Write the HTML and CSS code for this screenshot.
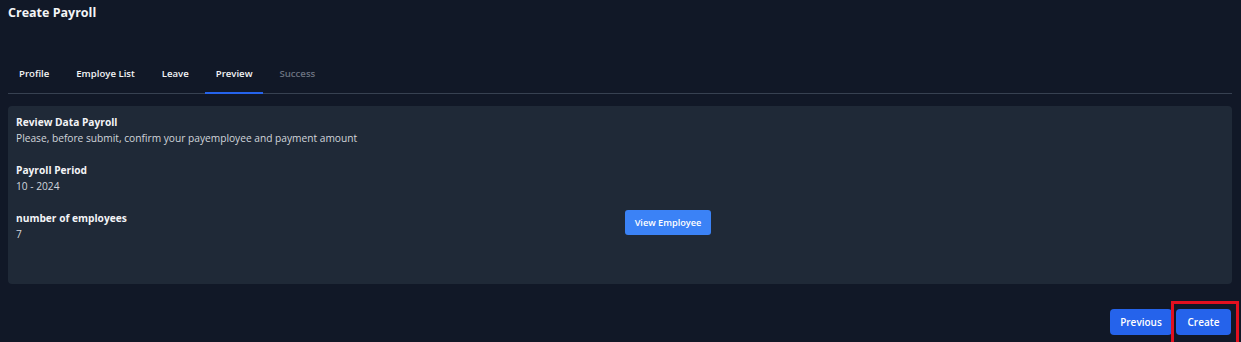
FILE: index.html
```html
<!DOCTYPE html>
<html>
<head>
<meta charset="utf-8">
<link rel="stylesheet" href="styles.css">
</head>
<body>
<div class="page">
  <h1 class="title">Create Payroll</h1>
  <nav class="tabs">
    <span class="tab">Profile</span>
    <span class="tab">Employe List</span>
    <span class="tab">Leave</span>
    <span class="tab active">Preview</span>
    <span class="tab disabled">Success</span>
  </nav>
  <section class="card">
    <div class="full">
      <div class="label">Review Data Payroll</div>
      <div class="value">Please, before submit, confirm your payemployee and payment amount</div>
    </div>
    <div class="full">
      <div class="label">Payroll Period</div>
      <div class="value">10 - 2024</div>
    </div>
    <div>
      <div class="label">number of employees</div>
      <div class="value">7</div>
    </div>
    <div class="right">
      <button class="btn btn-light">View Employee</button>
    </div>
  </section>
  <div class="actions">
    <button class="btn btn-primary prev">Previous</button>
    <span class="highlight"><button class="btn btn-primary create">Create</button></span>
  </div>
</div>
</body>
</html>
```
FILE: styles.css
```css
html, body {
  margin: 0;
  padding: 0;
  background: #111827;
}
body {
  font-family: "Open Sans", "Segoe UI", sans-serif;
  color: #e5e7eb;
  font-size: 10.2px;
}
.page {
  padding: 0 9px 0 8px;
  height: 342px;
  overflow: hidden;
}
.title {
  margin: 0;
  padding-top: 4px;
  font-size: 12.5px;
  font-weight: 700;
  color: #f3f4f6;
  line-height: 18px;
}
.tabs {
  display: flex;
  gap: 5px;
  margin-top: 39px;
  border-bottom: 1px solid #374151;
}
.tab {
  padding: 5px 11px 10px;
  font-size: 9.6px;
  font-weight: 600;
  color: #f3f4f6;
  line-height: 16px;
  border-bottom: 2px solid transparent;
  margin-bottom: -1px;
}
.tab.active {
  border-bottom-color: #2563eb;
}
.tab.disabled {
  color: #6b7280;
}
.card {
  margin-top: 12px;
  background: #1f2937;
  border-radius: 4px;
  padding: 8px 8px 42px;
  display: grid;
  grid-template-columns: 609px 1fr;
  row-gap: 16px;
  align-items: start;
}
.full {
  grid-column: 1 / 3;
}
.label {
  font-weight: 700;
  line-height: 16px;
  color: #f3f4f6;
}
.value {
  line-height: 16px;
  color: #d1d5db;
}
.right {
  display: flex;
}
.btn {
  font-family: inherit;
  font-size: 10px;
  font-weight: 600;
  color: #ffffff;
  border: none;
  border-radius: 3px;
  height: 26px;
  padding: 0 11px;
  cursor: pointer;
}
.btn-light {
  background: #3b82f6;
  height: 25px;
  font-size: 9.2px;
  width: 86px;
  padding: 0;
}
.btn-primary {
  background: #2563eb;
  border-radius: 4px;
}
.actions {
  display: flex;
  justify-content: flex-end;
  align-items: center;
  gap: 4px;
  margin-top: 25px;
  padding-right: 1px;
}
.prev {
  width: 62px;
  padding: 0;
}
.create {
  width: 55px;
  padding: 0;
}
.highlight {
  display: flex;
  position: relative;
}
.highlight::after {
  content: "";
  position: absolute;
  left: -5px;
  right: -8px;
  top: -8px;
  bottom: -12px;
  border: 3px solid #e3101f;
  pointer-events: none;
}
```
